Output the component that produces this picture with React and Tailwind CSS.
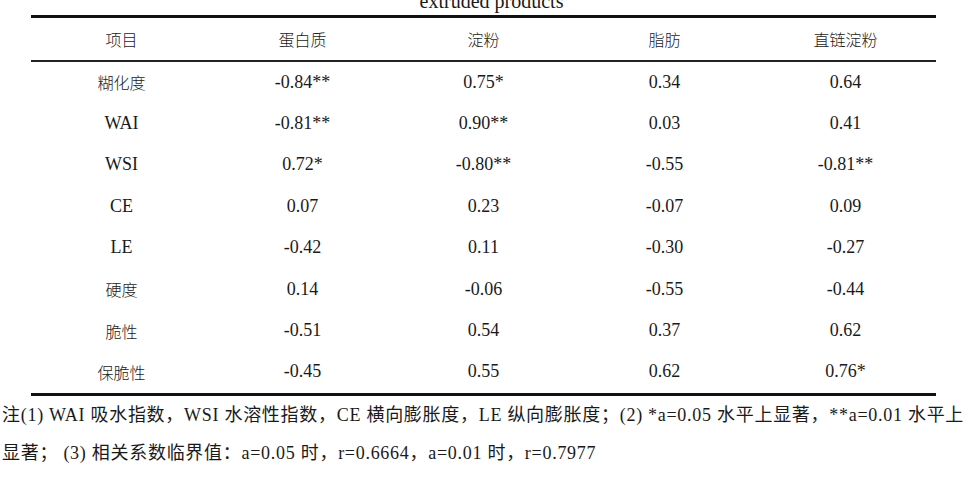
import React from "react";

const headers = ["项目", "蛋白质", "淀粉", "脂肪", "直链淀粉"];

const rows = [
  ["糊化度", "-0.84**", "0.75*", "0.34", "0.64"],
  ["WAI", "-0.81**", "0.90**", "0.03", "0.41"],
  ["WSI", "0.72*", "-0.80**", "-0.55", "-0.81**"],
  ["CE", "0.07", "0.23", "-0.07", "0.09"],
  ["LE", "-0.42", "0.11", "-0.30", "-0.27"],
  ["硬度", "0.14", "-0.06", "-0.55", "-0.44"],
  ["脆性", "-0.51", "0.54", "0.37", "0.62"],
  ["保脆性", "-0.45", "0.55", "0.62", "0.76*"],
];

const isCjk = (s) => /[\u4e00-\u9fff]/.test(s);

const Cell = ({ text }) => (
  <div className="flex items-center justify-center">
    {isCjk(text) ? (
      <span className="text-[16px] font-['Noto_Sans_CJK_SC',sans-serif] font-light">{text}</span>
    ) : (
      <span className="text-[18px] font-['Liberation_Serif',serif]">{text}</span>
    )}
  </div>
);

export default function App() {
  return (
    <div className="w-[979px] h-[478px] overflow-hidden bg-white text-[#1a1a1a] font-['Liberation_Serif','Noto_Sans_CJK_SC',serif]">
      <div className="h-[15px] overflow-hidden flex justify-center">
        <p className="text-[20px] leading-[20px] -mt-[9px] pl-[4px]">extruded products</p>
      </div>

      <div className="ml-[31px] w-[905px]">
        <div className="h-[3px] bg-[#111]" />
        <div className="grid grid-cols-5 h-[42px]">
          {headers.map((h) => (
            <Cell key={h} text={h} />
          ))}
        </div>
        <div className="h-[1.5px] bg-[#222]" />
        {rows.map((r) => (
          <div key={r[0]} className="grid grid-cols-5 h-[41.4px]">
            {r.map((c, i) => (
              <Cell key={i} text={c} />
            ))}
          </div>
        ))}
        <div className="h-[3px] bg-[#111]" />
      </div>

      <div className="pl-[2px] text-[18px] leading-[38px] tracking-[0.72px] font-['Liberation_Serif','Noto_Sans_CJK_SC',serif]">
        <p className="whitespace-nowrap">
          注(1) WAI 吸水指数，WSI 水溶性指数，CE 横向膨胀度，LE 纵向膨胀度；(2) *a=0.05 水平上显著，**a=0.01 水平上
        </p>
        <p className="whitespace-nowrap">
          显著； (3) 相关系数临界值：a=0.05 时，r=0.6664，a=0.01 时，r=0.7977
        </p>
      </div>
    </div>
  );
}
